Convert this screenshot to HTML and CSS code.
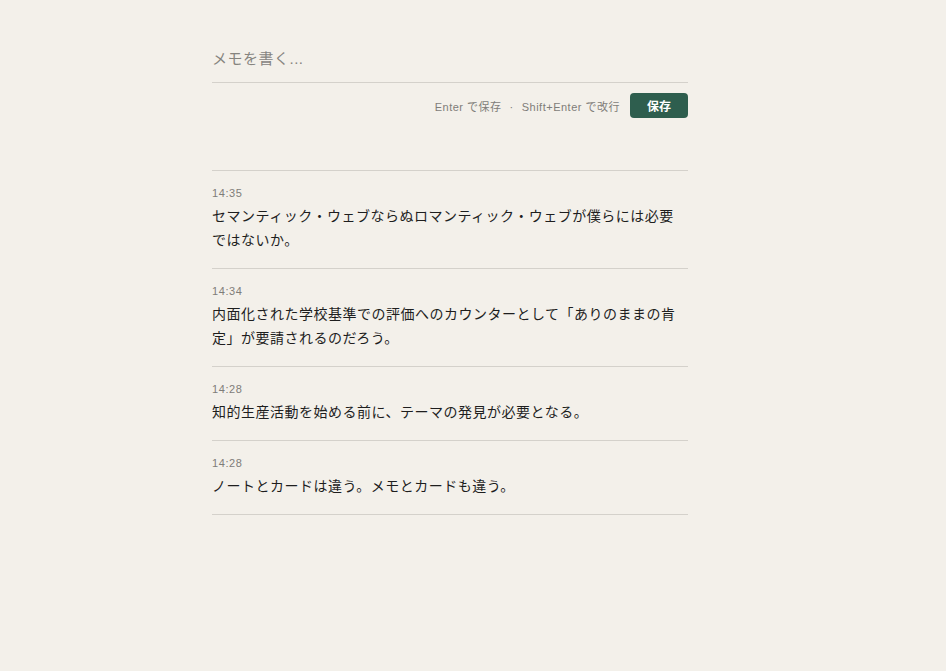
FILE: index.html
```html
<!DOCTYPE html>
<html lang="ja">
<head>
<meta charset="utf-8">
<title>メモ</title>
<link rel="stylesheet" href="styles.css">
</head>
<body>
<main class="page">
  <section class="composer">
    <div class="input">メモを書く...</div>
    <div class="actions">
      <span class="hint">Enter で保存<span class="sep">·</span>Shift+Enter で改行</span>
      <button class="save">保存</button>
    </div>
  </section>
  <ul class="memos">
    <li class="memo">
      <div class="time">14:35</div>
      <p class="text">セマンティック・ウェブならぬロマンティック・ウェブが僕らには必要ではないか。</p>
    </li>
    <li class="memo">
      <div class="time">14:34</div>
      <p class="text">内面化された学校基準での評価へのカウンターとして「ありのままの肯定」が要請されるのだろう。</p>
    </li>
    <li class="memo">
      <div class="time">14:28</div>
      <p class="text">知的生産活動を始める前に、テーマの発見が必要となる。</p>
    </li>
    <li class="memo">
      <div class="time">14:28</div>
      <p class="text">ノートとカードは違う。メモとカードも違う。</p>
    </li>
  </ul>
</main>
</body>
</html>
```

FILE: styles.css
```css
html, body {
  margin: 0;
  padding: 0;
  background: #f3f0ea;
}
body {
  font-family: "Liberation Sans", "Noto Sans CJK JP", sans-serif;
  color: #1e1e1e;
}
.page {
  width: 476px;
  margin-left: 212px;
  padding-top: 46px;
}
.composer {
  display: flex;
  flex-direction: column;
}
.input {
  font-size: 15px;
  line-height: 26px;
  color: #86847f;
  letter-spacing: 0.5px;
  padding-bottom: 10px;
  border-bottom: 1px solid #d4d1cb;
}
.actions {
  display: flex;
  justify-content: flex-end;
  align-items: center;
  gap: 10px;
  margin-top: 10px;
}
.hint {
  font-size: 11px;
  color: #7f7d79;
  letter-spacing: 0.5px;
}
.sep {
  margin: 0 8px;
}
.save {
  width: 58px;
  height: 25px;
  border: none;
  border-radius: 4px;
  background: #2e5e4e;
  color: #fff;
  font-family: inherit;
  font-size: 12px;
  font-weight: bold;
  padding: 0;
}
.memos {
  list-style: none;
  margin: 52px 0 0;
  padding: 0;
  border-top: 1px solid #d4d1cb;
}
.memo {
  padding: 15px 0 16px;
  border-bottom: 1px solid #d4d1cb;
}
.time {
  font-size: 11px;
  line-height: 14px;
  color: #7f7d79;
  letter-spacing: 0.6px;
}
.text {
  margin: 4px 0 0;
  font-size: 14px;
  line-height: 24px;
  letter-spacing: 0.5px;
}
```
